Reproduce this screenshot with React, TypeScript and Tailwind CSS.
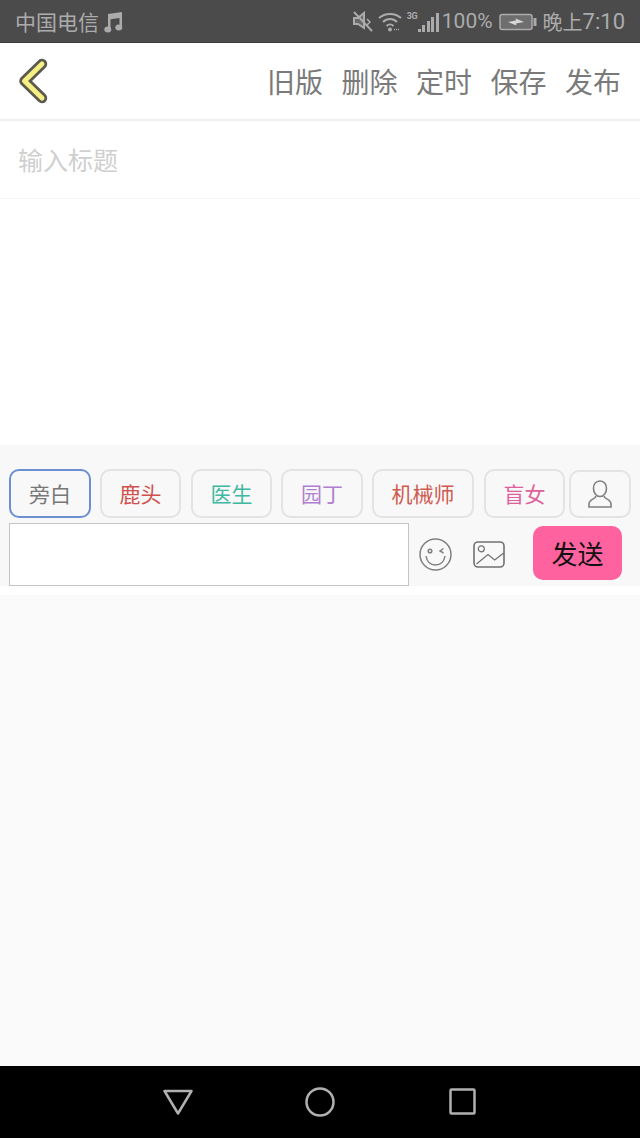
const F = "font-['Noto_Sans_CJK_SC','Noto_Sans',sans-serif]";

const tabs = [
  { t: "旁白", w: "w-[82px] mr-[9px]", c: "text-[#777777]", b: "border-[#6b8fd0]" },
  { t: "鹿头", w: "w-[81px] mr-[10px]", c: "text-[#d0504e]", b: "border-[#e3e3e3]" },
  { t: "医生", w: "w-[81px] mr-[9px]", c: "text-[#3fb8a2]", b: "border-[#e3e3e3]" },
  { t: "园丁", w: "w-[82px] mr-[9px]", c: "text-[#b07fd0]", b: "border-[#e3e3e3]" },
  { t: "机械师", w: "w-[102px] mr-[10px]", c: "text-[#d05a50]", b: "border-[#e3e3e3]" },
  { t: "盲女", w: "w-[81px] mr-[4px]", c: "text-[#e0609a]", b: "border-[#e3e3e3]" },
];

export default function App() {
  return (
    <div className={`${F} w-[640px] h-[1138px] flex flex-col bg-white overflow-hidden`}>
      {/* status bar */}
      <div className="h-[43px] shrink-0 bg-[#4b4b4b] border-b border-[#3a3a3a] flex items-center pl-[15px] pr-[15px] pt-[1px] text-[#ababab] text-[21px] leading-none">
        <span>中国电信</span>
        <svg width="19" height="22" viewBox="0 0 19 22" className="ml-[5px]" fill="#ababab">
          <path d="M4 3 L18 1 V16 H15.500 V7 L6.500 8.300 V19 H4 Z" />
          <ellipse cx="3.800" cy="18.500" rx="3.500" ry="3" />
          <ellipse cx="14.800" cy="16.500" rx="3.500" ry="3" />
        </svg>
        <div className="flex-1" />
        <svg width="20" height="21" viewBox="0 0 20 21" fill="none" stroke="#ababab" strokeWidth="2">
          <path d="M1 7 H5 L11 2 V17 L5 13 H1 Z" fill="#ababab" fillOpacity="0.3" />
          <path d="M14 8 L17 11 L14 14" strokeWidth="1.500" />
          <path d="M1 1 L19 20" />
        </svg>
        <svg width="24" height="20" viewBox="0 0 24 20" fill="none" stroke="#ababab" strokeWidth="2" className="ml-[5px]">
          <path d="M1 6 C7 0.500 17 0.500 23 6" />
          <path d="M5 10 C9 6 15 6 19 10" />
          <path d="M8.500 14 C10.500 12 13.500 12 15.500 14" />
          <circle cx="12" cy="17.500" r="2" fill="#ababab" stroke="none" />
          <path d="M16 17.500 H21" strokeWidth="1.500" strokeDasharray="1 1" />
        </svg>
        <div className="ml-[5px] w-[32px] h-[20px] flex items-end gap-[1.5px] relative">
          <span className="absolute left-0 top-0 text-[9px] font-bold leading-none font-['Roboto',sans-serif] tracking-[-0.5px]">3G</span>
          <span className="w-[3px] h-[3px] ml-[11px] bg-[#ababab]" />
          <span className="w-[3px] h-[7px] bg-[#ababab]" />
          <span className="w-[3px] h-[11px] bg-[#ababab]" />
          <span className="w-[3px] h-[15px] bg-[#ababab]" />
          <span className="w-[3px] h-[19px] bg-[#ababab]" />
        </div>
        <span className="ml-[3px] font-['Roboto',sans-serif]">100%</span>
        <svg width="38" height="18" viewBox="0 0 38 18" fill="none" className="ml-[6px]">
          <rect x="1" y="1.500" width="32" height="15" rx="2" stroke="#ababab" strokeWidth="1.500" fill="#6e6e6e" />
          <rect x="34.500" y="5" width="3" height="8" fill="#ababab" />
          <path d="M9 9 L17 7.500 L16.500 5.500 L25 9 L17 10.500 L17.500 12.500 Z" fill="#d8d8d8" />
        </svg>
        <span className="ml-[6px] text-[20px]">晚上</span>
        <span className="font-['Roboto',sans-serif] text-[22px]">7:10</span>
      </div>

      {/* nav */}
      <div className="h-[78px] shrink-0 border-b-2 border-[#eeeeee] flex items-center justify-between pl-[18px] pr-[19px]">
        <svg width="30" height="46" viewBox="0 0 30 46" fill="none">
          <path d="M24 6 L6.500 23 L24 40" stroke="#5a5a4f" strokeWidth="10.500" strokeLinecap="round" strokeLinejoin="round" />
          <path d="M24 6 L6.500 23 L24 40" stroke="#f5ef84" strokeWidth="5" strokeLinecap="round" strokeLinejoin="round" />
        </svg>
        <div className="flex gap-[18.500px] text-[28px] leading-none text-[#7a7a7a]">
          <span>旧版</span>
          <span>删除</span>
          <span>定时</span>
          <span>保存</span>
          <span>发布</span>
        </div>
      </div>

      {/* title */}
      <div className="h-[78px] shrink-0 border-b border-[#f5f5f5] flex items-center pl-[18px] text-[25px] text-[#cfcfcf]">
        输入标题
      </div>

      {/* editor */}
      <div className="h-[246px] shrink-0 bg-white" />

      {/* toolbar */}
      <div className="h-[141px] shrink-0 bg-[#f8f8f8] flex flex-col pl-[9px] pt-[24px]">
        <div className="flex items-center h-[49px]">
          {tabs.map((tab) => (
            <div
              key={tab.t}
              className={`${tab.w} h-[49px] rounded-[10px] border-2 ${tab.b} ${tab.c} flex items-center justify-center text-[21px] leading-none`}
            >
              {tab.t}
            </div>
          ))}
          <div className="w-[62px] h-[48px] rounded-[10px] border-2 border-[#e3e3e3] flex items-center justify-center">
            <svg width="24" height="28" viewBox="0 0 24 28" fill="none" stroke="#808080" strokeWidth="1.600">
              <path d="M12 1 C7.500 1 5.500 4.500 5.500 8.500 C5.500 12.500 8 16.500 12 16.500 C16 16.500 18.500 12.500 18.500 8.500 C18.500 4.500 16.500 1 12 1 Z" />
              <path d="M8 16 C8 19 1 19 1 24 V27 H23 V24 C23 19 16 19 16 16" />
            </svg>
          </div>
        </div>
        <div className="flex items-start mt-[5px]">
          <div className="w-[400px] h-[63px] bg-white border border-[#c4c4c4]" />
          <svg width="33" height="33" viewBox="0 0 33 33" fill="none" stroke="#808080" strokeWidth="1.500" className="ml-[10px] mt-[15px]">
            <circle cx="16.500" cy="16.500" r="15.500" />
            <circle cx="11" cy="13" r="1.800" />
            <path d="M24.500 10.500 L21 13 L24.500 15" />
            <path d="M7 18 C8 24 12 27 16.500 27 C21 27 25 24 26 18" />
          </svg>
          <svg width="32" height="27" viewBox="0 0 32 27" fill="none" stroke="#707070" strokeWidth="1.600" className="ml-[21px] mt-[18px]">
            <rect x="1" y="1" width="30" height="25" rx="4" />
            <circle cx="8.300" cy="7.800" r="3" strokeWidth="1.200" />
            <path d="M3.500 23 L15 13.500 L21.700 19 L30.700 12" strokeWidth="1.200" />
          </svg>
          <div className="ml-[28px] mt-[3px] w-[89px] h-[54px] rounded-[10px] bg-[#ff639f] flex items-center justify-center text-[26px] leading-none text-[#111111]">
            发送
          </div>
        </div>
      </div>

      <div className="h-[9px] shrink-0 bg-white" />

      <div className="flex-1 bg-[#fafafa]" />

      {/* system nav */}
      <div className="h-[72px] shrink-0 bg-black flex items-center pl-[163px] pb-[1px]">
        <svg width="30" height="26" viewBox="0 0 30 26" fill="none" stroke="#b0b0b0" strokeWidth="2.500" strokeLinejoin="round">
          <path d="M1.500 2 H28.500 L15 24.500 Z" />
        </svg>
        <svg width="30" height="30" viewBox="0 0 30 30" fill="none" stroke="#b0b0b0" strokeWidth="2.500" className="ml-[112px]">
          <circle cx="15" cy="15" r="13.500" />
        </svg>
        <svg width="27" height="27" viewBox="0 0 27 27" fill="none" stroke="#b0b0b0" strokeWidth="2.500" strokeLinejoin="round" className="ml-[114px]">
          <rect x="1.500" y="1.500" width="24" height="24" rx="1" />
        </svg>
      </div>
    </div>
  );
}
